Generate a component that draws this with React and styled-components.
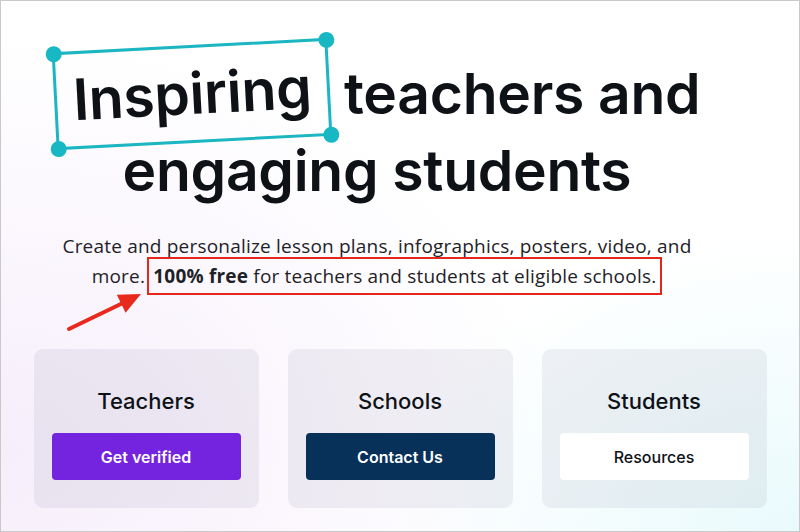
import React from 'react'
import styled, { createGlobalStyle } from 'styled-components'

const GlobalStyle = createGlobalStyle`
  html, body {
    margin: 0;
    padding: 0;
    background: #ffffff;
  }
  * {
    box-sizing: border-box;
  }
`

const Frame = styled.div`
  position: relative;
  width: 800px;
  height: 532px;
  overflow: hidden;
  border: 1px solid #c9c9c9;
  padding-top: 54px;
  font-family: Inter, "Liberation Sans", sans-serif;
  background:
    radial-gradient(ellipse 420px 300px at 100% 100%, rgba(232, 250, 252, 0.95) 0%, rgba(232, 250, 252, 0) 100%),
    radial-gradient(ellipse 560px 420px at 0% 85%, rgba(246, 238, 251, 1) 0%, rgba(246, 238, 251, 0) 100%),
    #ffffff;
`

const Hero = styled.section`
  padding-right: 46px;
  text-align: center;
`

const Heading = styled.h1`
  margin: 0;
  font-size: 57px;
  line-height: 77px;
  font-weight: 600;
  letter-spacing: -0.3px;
  color: #0e1217;
`

const Selected = styled.span`
  position: relative;
  display: inline-block;
  margin: -11px 0;
  padding: 12px 16px;
  line-height: 68px;
  border: 3px solid #1bb6c1;
  transform: rotate(-3deg);
`

const Handle = styled.span`
  position: absolute;
  width: 16px;
  height: 16px;
  border-radius: 50%;
  background: #17b8c3;
  top: ${p => (p.$bottom ? 'auto' : '-9.5px')};
  bottom: ${p => (p.$bottom ? '-9.5px' : 'auto')};
  left: ${p => (p.$right ? 'auto' : '-9.5px')};
  right: ${p => (p.$right ? '-9.5px' : 'auto')};
`

const Lead = styled.p`
  margin: 22px 0 0;
  font-family: "Open Sans", "Liberation Sans", sans-serif;
  font-size: 19px;
  line-height: 30px;
  letter-spacing: 0.2px;
  color: #1e2227;
`

const Highlight = styled.span`
  padding: 4px 4px;
  margin-left: -3px;
  border: 2px solid #e4261c;

  strong {
    font-weight: 700;
  }
`

const Arrow = styled.svg`
  position: absolute;
  left: 60px;
  top: 285px;
`

const Cards = styled.div`
  display: grid;
  grid-template-columns: repeat(3, 225px);
  justify-content: center;
  gap: 29px;
  margin-top: 58px;
`

const Card = styled.div`
  display: flex;
  flex-direction: column;
  align-items: center;
  height: 159px;
  padding: 38px 18px 28px;
  border-radius: 9px;
  background: rgba(40, 50, 90, 0.065);
`

const CardTitle = styled.h2`
  margin: 0;
  font-size: 22px;
  line-height: 28px;
  font-weight: 500;
  color: #0e1217;
`

const variants = {
  purple: { bg: '#7423df', fg: '#ffffff' },
  navy: { bg: '#073158', fg: '#ffffff' },
  light: { bg: '#ffffff', fg: '#0e1217' },
}

const Button = styled.button`
  width: 100%;
  height: 47px;
  margin-top: 18px;
  border: none;
  border-radius: 4px;
  font-family: Inter, "Liberation Sans", sans-serif;
  font-size: 16px;
  font-weight: ${p => (p.$variant === 'light' ? 500 : 600)};
  background: ${p => variants[p.$variant].bg};
  color: ${p => variants[p.$variant].fg};
  cursor: pointer;
`

const audiences = [
  { title: 'Teachers', action: 'Get verified', variant: 'purple' },
  { title: 'Schools', action: 'Contact Us', variant: 'navy' },
  { title: 'Students', action: 'Resources', variant: 'light' },
]

export default function App() {
  return (
    <Frame>
      <GlobalStyle />
      <Hero>
        <Heading>
          <Selected>
            Inspiring
            <Handle />
            <Handle $right />
            <Handle $bottom />
            <Handle $bottom $right />
          </Selected>{' '}
          teachers and
          <br />
          engaging students
        </Heading>
        <Lead>
          Create and personalize lesson plans, infographics, posters, video, and
          <br />
          more. <Highlight><strong>100% free</strong> for teachers and students at eligible schools.</Highlight>
        </Lead>
      </Hero>

      <Arrow width="90" height="50" viewBox="0 0 90 50">
        <line x1="8" y1="43" x2="64" y2="16" stroke="#e8291d" strokeWidth="4" strokeLinecap="round" />
        <polygon points="80,8 55.8,8.7 64.6,26.7" fill="#e8291d" />
      </Arrow>

      <Cards>
        {audiences.map(a => (
          <Card key={a.title}>
            <CardTitle>{a.title}</CardTitle>
            <Button $variant={a.variant}>{a.action}</Button>
          </Card>
        ))}
      </Cards>
    </Frame>
  )
}
